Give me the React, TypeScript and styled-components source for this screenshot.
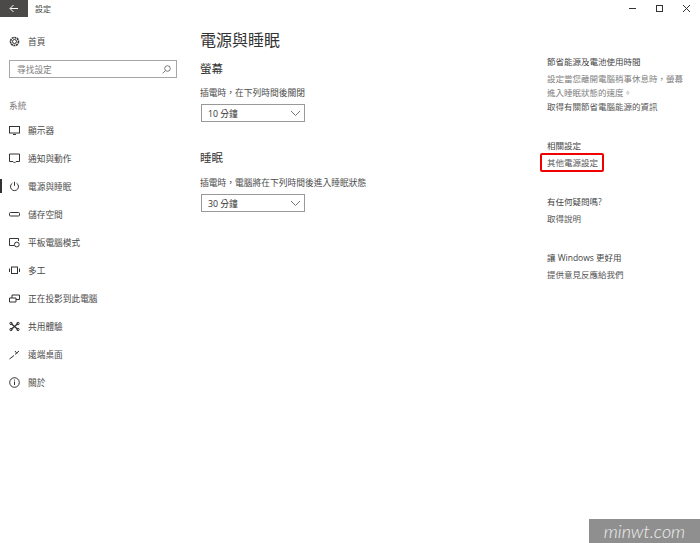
import React from "react";
import styled, { createGlobalStyle } from "styled-components";

const Global = createGlobalStyle`
  html, body { margin: 0; padding: 0; background: #fff; }
  body { font-family: "Open Sans", "Noto Sans CJK TC", "Liberation Sans", sans-serif; color: #222; }
`;
const Page = styled.div`
  width: 700px; height: 543px; position: relative; overflow: hidden; background: #fff;
  display: flex; flex-direction: column;
`;
const TitleBar = styled.div`
  height: 17px; display: flex; align-items: center; flex: none;
`;
const Back = styled.div`
  width: 28px; height: 17px; background: #4c4a48; display: flex; align-items: center; justify-content: center;
`;
const TitleText = styled.span`
  font-size: 8px; line-height: 15px; height: 15px; margin-left: 7px; color: #444;
`;
const WinButtons = styled.div`
  margin-left: auto; display: flex; align-items: center; gap: 20px; padding: 0 10px 0 18px;
`;
const Body = styled.div`
  flex: 1; display: flex; min-height: 0;
`;
const Sidebar = styled.nav`
  width: 200px; flex: none; padding-top: 10px; display: flex; flex-direction: column;
`;
const NavRow = styled.div`
  height: 28px; display: flex; align-items: center; position: relative; padding-left: 9px; gap: 8px;
  font-size: 8.7px; color: #4a4a4a;
`;
const Indicator = styled.span`
  position: absolute; left: 0; top: 7px; width: 2px; height: 14px; background: #333;
`;
const IconSlot = styled.span`
  width: 11px; height: 11px; display: flex; flex: none;
`;
const Search = styled.div`
  margin: 5px 0 0 9px; width: 168px; height: 18px; box-sizing: border-box; border: 1px solid #a6a6a6;
  display: flex; align-items: center; justify-content: space-between; padding: 0 5px 0 7px;
  font-size: 8.7px; color: #808080;
`;
const SectionLabel = styled.div`
  font-size: 8.7px; color: #808080; margin: 22px 0 3px 9px; height: 13px; line-height: 13px;
`;
const Main = styled.main`
  width: 347px; flex: none; padding-top: 11px;
`;
const H1 = styled.h1`
  margin: 0; font-size: 16px; font-weight: 400; line-height: 24px; color: #333;
`;
const H2 = styled.h2<{ $top: number }>`
  margin: ${(p) => p.$top}px 0 0; font-size: 11.5px; font-weight: 400; line-height: 18px; color: #333;
`;
const Label = styled.div<{ $top: number }>`
  margin-top: ${(p) => p.$top}px; font-size: 8.75px; line-height: 13px; color: #4a4a4a;
`;
const Select = styled.div`
  margin: 4px 0 0 1px; width: 104px; height: 18px; box-sizing: border-box; border: 1px solid #999;
  display: flex; align-items: center; justify-content: space-between; padding: 0 3px 0 6px;
  font-size: 8.75px; color: #333;
`;
const Aside = styled.aside`
  flex: 1; padding-top: 38px; display: flex; flex-direction: column; font-size: 8.5px; line-height: 14px;
`;
const AsideTitle = styled.div<{ $top?: number }>`
  margin: ${(p) => p.$top ?? 0}px 0 3px; color: #444;
`;
const AsideText = styled.div`
  width: 140px; color: #808080;
`;
const AsideLink = styled.div`
  color: #555; width: fit-content; position: relative;
`;
const Highlight = styled.span`
  position: absolute; left: -7px; right: -6px; top: -3px; bottom: -2px; border: 2px solid #f00000; border-radius: 2px;
`;
const Watermark = styled.div`
  position: absolute; right: 0; bottom: 0; width: 111px; height: 24px; background: #8f8f8f;
  display: flex; justify-content: center; align-items: center;
  font-family: "Lato", sans-serif; font-style: italic; font-weight: 300; font-size: 18px; color: #f0f0f0;
`;

const S = { fill: "none", stroke: "#333", strokeWidth: 1 };
const I = ({ children }: { children: React.ReactNode }) => (
  <IconSlot><svg width="11" height="11" viewBox="0 0 11 11" {...S}>{children}</svg></IconSlot>
);
const icons: Record<string, React.ReactNode> = {
  home: <I><circle cx="5.5" cy="5.5" r="2" /><circle cx="5.5" cy="5.5" r="4" strokeDasharray="2 .6" strokeWidth="1.6" /></I>,
  display: <I><rect x=".5" y="1.5" width="10" height="6.5" /><path d="M4 9.5h3" /></I>,
  notify: <I><path d="M.5 1h10v7.5H7L5.5 10 4 8.5H.5z" /></I>,
  power: <I><path d="M3.4 2.2a4 4 0 1 0 4.2 0M5.5 .8v4" /></I>,
  storage: <I><rect x=".5" y="3.5" width="10" height="3.5" rx="1" /></I>,
  tablet: <I><path d="M5 8.5H.5v-7h9V4" /><circle cx="7.8" cy="7.5" r="2.4" /></I>,
  multi: <I><rect x="2.5" y="2" width="6" height="6.5" /><path d="M.5 3.5v3.5M10.5 3.5v3.5" /></I>,
  project: <I><path d="M.5 5h6.5v4H.5zM3 5V2h7.5v4.5H7" /></I>,
  share: <I><circle cx="2" cy="2.5" r="1.2" /><circle cx="9" cy="2.5" r="1.2" /><circle cx="2" cy="8.5" r="1.2" /><circle cx="9" cy="8.5" r="1.2" /><path d="M2 2.5l7 6M9 2.5l-7 6" strokeWidth="1.4" /></I>,
  remote: <I><path d="M.5 10L5 6.5M6 5.5L10 2M6 2l2 2.5" /></I>,
  about: <I><circle cx="5.5" cy="5.5" r="4.8" /><path d="M5.5 4.5v3.5M5.5 2.6v1" /></I>,
};

const navItems: [string, string][] = [
  ["display", "顯示器"], ["notify", "通知與動作"], ["power", "電源與睡眠"], ["storage", "儲存空間"],
  ["tablet", "平板電腦模式"], ["multi", "多工"], ["project", "正在投影到此電腦"], ["share", "共用體驗"],
  ["remote", "遠端桌面"], ["about", "關於"],
];

const Chevron = () => (
  <svg width="11" height="7" viewBox="0 0 11 7" fill="none" stroke="#777"><path d="M1 1l4.5 4.5L10 1" /></svg>
);

export default function App() {
  return (
    <Page>
      <Global />
      <TitleBar>
        <Back>
          <svg width="10" height="9" viewBox="0 0 10 9" fill="none" stroke="#fff"><path d="M9 4.5H1.2M4.5 1L1 4.5 4.5 8" /></svg>
        </Back>
        <TitleText>設定</TitleText>
        <WinButtons>
          <svg width="7" height="7" viewBox="0 0 7 7" stroke="#333" fill="none"><path d="M0 3.5h7" /></svg>
          <svg width="7" height="7" viewBox="0 0 7 7" stroke="#333" fill="none"><rect x=".5" y=".5" width="6" height="6" /></svg>
          <svg width="7" height="7" viewBox="0 0 7 7" stroke="#333" fill="none"><path d="M0 0l7 7M7 0L0 7" /></svg>
        </WinButtons>
      </TitleBar>
      <Body>
        <Sidebar>
          <NavRow>{icons.home}首頁</NavRow>
          <Search>
            尋找設定
            <svg width="9" height="9" viewBox="0 0 9 9" fill="none" stroke="#777"><circle cx="5.5" cy="3.5" r="2.8" /><path d="M3.5 5.5L.7 8.3" /></svg>
          </Search>
          <SectionLabel>系統</SectionLabel>
          {navItems.map(([k, t]) => (
            <NavRow key={k}>
              {k === "power" && <Indicator />}
              {icons[k]}
              {t}
            </NavRow>
          ))}
        </Sidebar>
        <Main>
          <H1>電源與睡眠</H1>
          <H2 $top={8}>螢幕</H2>
          <Label $top={9}>插電時，在下列時間後關閉</Label>
          <Select>10 分鐘<Chevron /></Select>
          <H2 $top={27}>睡眠</H2>
          <Label $top={10}>插電時，電腦將在下列時間後進入睡眠狀態</Label>
          <Select>30 分鐘<Chevron /></Select>
        </Main>
        <Aside>
          <AsideTitle>節省能源及電池使用時間</AsideTitle>
          <AsideText>設定當您離開電腦稍事休息時，螢幕進入睡眠狀態的速度。</AsideText>
          <AsideLink>取得有關節省電腦能源的資訊</AsideLink>
          <AsideTitle $top={25}>相關設定</AsideTitle>
          <AsideLink>其他電源設定<Highlight /></AsideLink>
          <AsideTitle $top={25}>有任何疑問嗎?</AsideTitle>
          <AsideLink>取得說明</AsideLink>
          <AsideTitle $top={25}>讓 Windows 更好用</AsideTitle>
          <AsideLink>提供意見反應給我們</AsideLink>
        </Aside>
      </Body>
      <Watermark>minwt.com</Watermark>
    </Page>
  );
}
